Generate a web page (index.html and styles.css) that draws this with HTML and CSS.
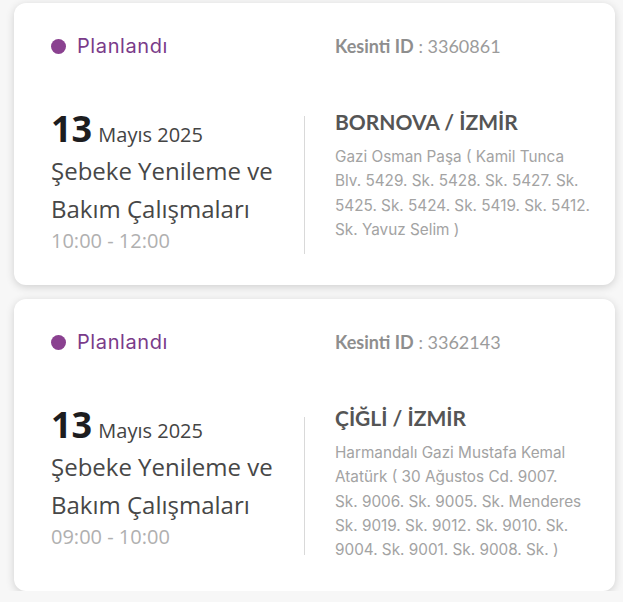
FILE: index.html
```html
<!DOCTYPE html>
<html lang="tr">
<head>
<meta charset="utf-8">
<link rel="stylesheet" href="styles.css">
</head>
<body>
<div class="list">
  <div class="card">
    <div class="top">
      <div class="status"><span class="dot"></span>Planlandı</div>
      <div class="kid"><b>Kesinti ID</b> : 3360861</div>
    </div>
    <div class="body">
      <div class="left">
        <div class="date"><span class="day">13</span> <span class="month">Mayıs 2025</span></div>
        <div class="title">Şebeke Yenileme ve Bakım Çalışmaları</div>
        <div class="time">10:00 - 12:00</div>
      </div>
      <div class="divider"></div>
      <div class="right">
        <div class="place">BORNOVA / İZMİR</div>
        <div class="addr">Gazi Osman Paşa ( Kamil Tunca<br>Blv. 5429. Sk. 5428. Sk. 5427. Sk.<br>5425. Sk. 5424. Sk. 5419. Sk. 5412.<br>Sk. Yavuz Selim )</div>
      </div>
    </div>
  </div>
  <div class="card">
    <div class="top">
      <div class="status"><span class="dot"></span>Planlandı</div>
      <div class="kid"><b>Kesinti ID</b> : 3362143</div>
    </div>
    <div class="body">
      <div class="left">
        <div class="date"><span class="day">13</span> <span class="month">Mayıs 2025</span></div>
        <div class="title">Şebeke Yenileme ve Bakım Çalışmaları</div>
        <div class="time">09:00 - 10:00</div>
      </div>
      <div class="divider"></div>
      <div class="right">
        <div class="place">ÇİĞLİ / İZMİR</div>
        <div class="addr">Harmandalı Gazi Mustafa Kemal<br>Atatürk ( 30 Ağustos Cd. 9007.<br>Sk. 9006. Sk. 9005. Sk. Menderes<br>Sk. 9019. Sk. 9012. Sk. 9010. Sk.<br>9004. Sk. 9001. Sk. 9008. Sk. )</div>
      </div>
    </div>
  </div>
</div>
</body>
</html>
```

FILE: styles.css
```css
* { box-sizing: border-box; }
html, body { margin: 0; padding: 0; background: #f7f7f7; }
body { font-family: "Open Sans", sans-serif; }
.list {
  display: flex;
  flex-direction: column;
  gap: 14px;
  padding: 3px 8px 0 14px;
}
.card {
  background: #fff;
  border-radius: 12px;
  box-shadow: 0 2px 8px rgba(0,0,0,0.16);
  padding: 30px 20px 29px 37px;
}
.top {
  display: flex;
  align-items: center;
  height: 26px;
}
.status {
  width: 284px;
  display: flex;
  align-items: center;
  font-family: "Inter", sans-serif;
  font-size: 20px;
  letter-spacing: 0.6px;
  color: #7a3b8a;
}
.dot {
  width: 15px;
  height: 15px;
  border-radius: 50%;
  background: #8a4190;
  margin-right: 11px;
}
.kid {
  font-family: "Lato", sans-serif;
  font-size: 18px;
  color: #9b9b9b;
}
.kid b { color: #8e8e8e; font-weight: 700; }
.body {
  display: flex;
  align-items: flex-start;
  margin-top: 51px;
}
.left {
  width: 253px;
  padding-right: 10px;
  padding-bottom: 2px;
}
.date { line-height: 38px; height: 38px; color: #222; }
.day { font-size: 36px; font-weight: 700; color: #1d1d1f; margin-right: 2px; }
.month { font-size: 20px; color: #444; }
.title {
  margin-top: 4px;
  font-size: 24px;
  line-height: 38px;
  color: #474747;
}
.time {
  font-size: 20px;
  line-height: 26px;
  color: #b0b0b0;
}
.divider {
  width: 1px;
  height: 138px;
  background: #d9d9d9;
  align-self: center;
  margin-top: 4px;
}
.right {
  padding-left: 30px;
  flex: 1;
}
.place {
  margin-top: -2px;
  font-family: "Lato", sans-serif;
  font-weight: 700;
  font-size: 21px;
  line-height: 28px;
  color: #555;
}
.addr {
  margin-top: 9px;
  font-family: "Inter", sans-serif;
  font-size: 15.3px;
  line-height: 24.3px;
  white-space: nowrap;
  color: #a3a3a3;
}
```
